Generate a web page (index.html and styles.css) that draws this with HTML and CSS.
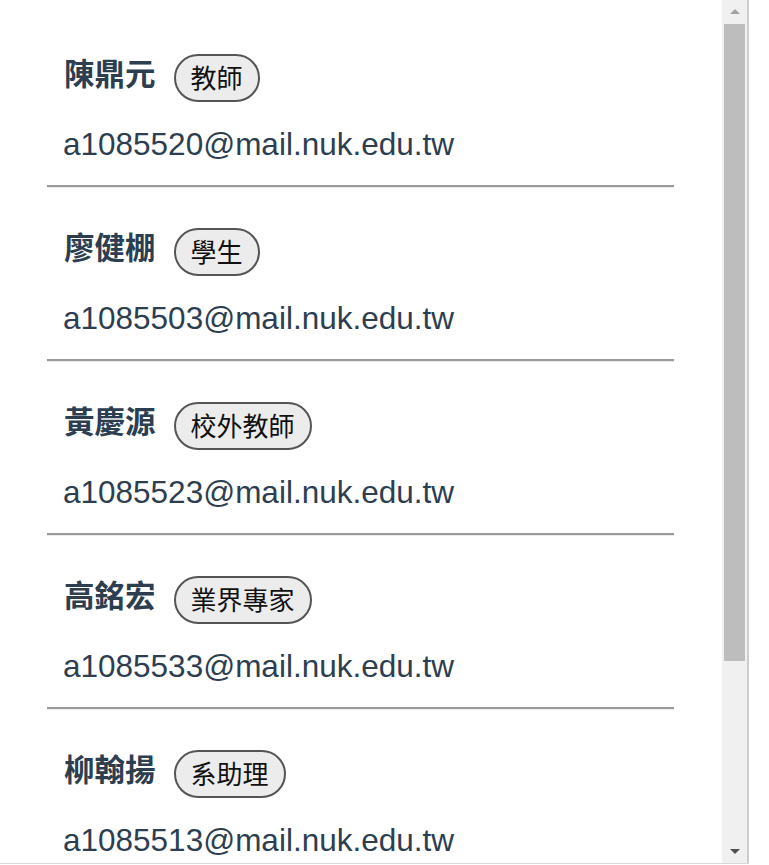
FILE: index.html
```html
<!DOCTYPE html>
<html lang="zh-Hant">
<head>
<meta charset="utf-8">
<title>聯絡人</title>
<link rel="stylesheet" href="styles.css">
</head>
<body>
<div class="frame">
  <div class="content">
    <ul class="list">
      <li class="item">
        <div class="head"><span class="name">陳鼎元</span><span class="badge">教師</span></div>
        <div class="email">a1085520@mail.nuk.edu.tw</div>
        <hr class="sep">
      </li>
      <li class="item">
        <div class="head"><span class="name">廖健棚</span><span class="badge">學生</span></div>
        <div class="email">a1085503@mail.nuk.edu.tw</div>
        <hr class="sep">
      </li>
      <li class="item">
        <div class="head"><span class="name">黃慶源</span><span class="badge">校外教師</span></div>
        <div class="email">a1085523@mail.nuk.edu.tw</div>
        <hr class="sep">
      </li>
      <li class="item">
        <div class="head"><span class="name">高銘宏</span><span class="badge">業界專家</span></div>
        <div class="email">a1085533@mail.nuk.edu.tw</div>
        <hr class="sep">
      </li>
      <li class="item">
        <div class="head"><span class="name">柳翰揚</span><span class="badge">系助理</span></div>
        <div class="email">a1085513@mail.nuk.edu.tw</div>
        <hr class="sep">
      </li>
    </ul>
  </div>
  <div class="scrollbar">
    <div class="arrow up"></div>
    <div class="thumb"></div>
    <div class="arrow down"></div>
  </div>
</div>
</body>
</html>
```

FILE: styles.css
```css
html, body {
  margin: 0;
  padding: 0;
  background: #fff;
}

.frame {
  display: flex;
  width: 749px;
  height: 863px;
  border-bottom: 1px solid #d9d9d9;
}

.content {
  width: 722px;
  height: 863px;
  overflow: hidden;
}

.list {
  list-style: none;
  margin: 0;
  padding: 54px 0 0 47px;
  width: 627px;
}

.item {
  display: flex;
  flex-direction: column;
}

.head {
  display: flex;
  align-items: center;
  height: 48px;
  padding-left: 17px;
}

.name {
  font-family: "Noto Sans CJK TC", sans-serif;
  font-weight: 700;
  font-size: 30.5px;
  color: #2c3e50;
  margin-right: 18px;
  line-height: 36px;
  padding-bottom: 12px;
}

.badge {
  box-sizing: border-box;
  height: 48px;
  padding: 0 15px;
  border: 2px solid #555;
  border-radius: 24px;
  background: #ececec;
  font-family: "Noto Sans CJK TC", sans-serif;
  font-size: 26px;
  line-height: 41px;
  color: #111;
}

.email {
  margin-top: 22px;
  height: 40px;
  line-height: 40px;
  padding-left: 16px;
  font-family: "Liberation Sans", Arial, sans-serif;
  font-size: 31.5px;
  color: #2c3e50;
}

.sep {
  margin: 21px 0 40px 0;
  height: 0;
  border: 0;
  border-top: 2px solid #9a9a9a;
  border-bottom: 1px solid #ececec;
}

.scrollbar {
  width: 25px;
  height: 863px;
  background: #f0f0f0;
  border-right: 2px solid #cdcdcd;
  display: flex;
  flex-direction: column;
  align-items: center;
}

.thumb {
  width: 21px;
  height: 637px;
  margin-top: 10px;
  background: #bdbdbd;
}

.arrow {
  width: 0;
  height: 0;
  border-left: 5px solid transparent;
  border-right: 5px solid transparent;
}

.arrow.up {
  margin-top: 9px;
  border-bottom: 5px solid #a3a3a3;
}

.arrow.down {
  margin-top: auto;
  margin-bottom: 9px;
  border-top: 5px solid #505050;
}
```
